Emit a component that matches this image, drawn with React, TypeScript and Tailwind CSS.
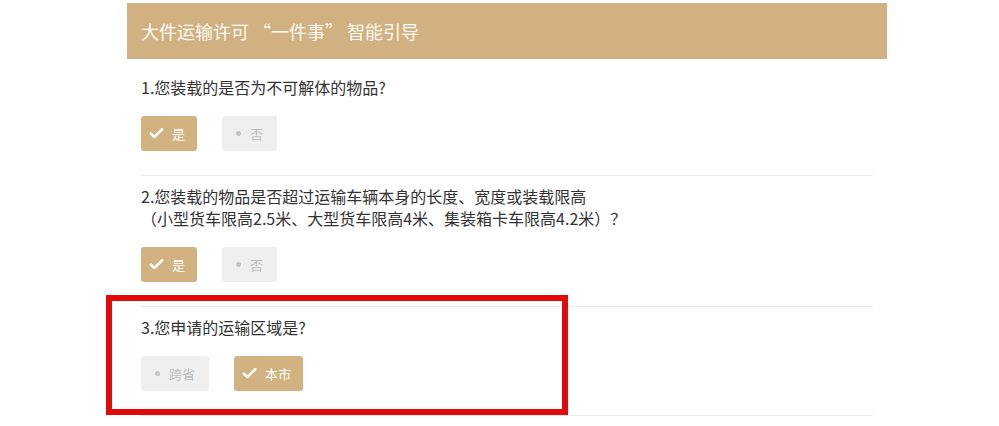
import { Check } from "lucide-react";

type Option = {
    label: string;
    checked: boolean;
};

type Question = {
    lines: string[];
    options: Option[];
};

const questions: Question[] = [
    {
        lines: ["1.您装载的是否为不可解体的物品?"],
        options: [
            { label: "是", checked: true },
            { label: "否", checked: false },
        ],
    },
    {
        lines: [
            "2.您装载的物品是否超过运输车辆本身的长度、宽度或装载限高",
            "（小型货车限高2.5米、大型货车限高4米、集装箱卡车限高4.2米）？",
        ],
        options: [
            { label: "是", checked: true },
            { label: "否", checked: false },
        ],
    },
    {
        lines: ["3.您申请的运输区域是?"],
        options: [
            { label: "跨省", checked: false },
            { label: "本市", checked: true },
        ],
    },
];

const OptionButton = ({ option }: { option: Option }) => {
    if (option.checked) {
        return (
            <div className="h-[35px] px-[7px] rounded-[3px] bg-[#d2b281] flex items-center gap-[7px] text-white text-[13px]">
                <Check size={17} strokeWidth={3.5} className="text-white" />
                <span className="pr-[5px]">{option.label}</span>
            </div>
        );
    }
    return (
        <div className="h-[35px] px-[14px] rounded-[3px] bg-[#efefef] flex items-center gap-[9px] text-[#bdbdbd] text-[13px]">
            <span className="w-[5px] h-[5px] rounded-full bg-[#c4c4c4]" />
            <span>{option.label}</span>
        </div>
    );
};

const App = () => {
    return (
        <div
            className="relative w-[999px] h-[426px] bg-white overflow-hidden"
            style={{ fontFamily: '"Noto Sans CJK SC", "Noto Sans", sans-serif' }}
        >
            <div className="ml-[127px] w-[760px] pt-[3px]">

                {/* HEADER */}
                <div className="h-[56px] bg-[#d1b182] px-[14px] flex items-center text-[18px] text-[#fffaf2]">
                    大件运输许可 “一件事” 智能引导
                </div>

                {/* QUESTIONS */}
                {questions.map((q, i) => (
                    <div
                        key={i}
                        className={`mx-[14px] border-b border-[#ececec] pb-[24px] ${i === 0 ? "pt-[17px]" : "pt-[9px]"}`}
                    >
                        <div className="text-[16px] leading-[22px] text-[#333]">
                            {q.lines.map((line, j) => (
                                <div key={j}>{line}</div>
                            ))}
                        </div>
                        <div className="mt-[18px] flex gap-[25px]">
                            {q.options.map((o, j) => (
                                <OptionButton key={j} option={o} />
                            ))}
                        </div>
                    </div>
                ))}
            </div>

            {/* annotation */}
            <div className="absolute left-[106px] top-[295px] w-[462px] h-[120px] border-[6px] border-[#e00a0a]" />
        </div>
    );
};

export default App;
